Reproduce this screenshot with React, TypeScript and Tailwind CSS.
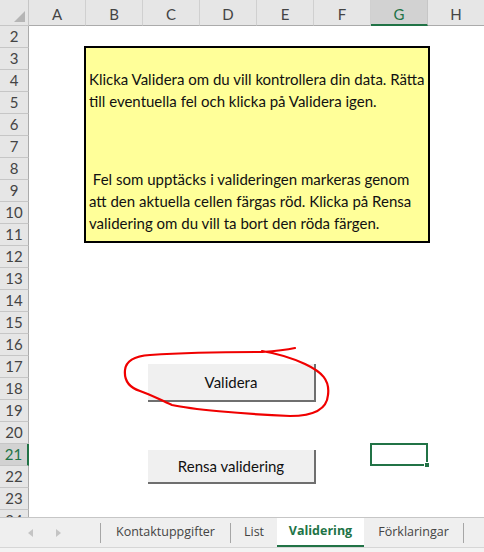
const COLUMNS = ["A", "B", "C", "D", "E", "F", "G", "H"];
const ROWS = Array.from({ length: 23 }, (_, i) => i + 2);

const SELECTED_COL = "G";
const SELECTED_ROW = 21;

function CornerCell() {
  return (
    <div className="relative h-full w-[29px] shrink-0 border-b border-r border-[#c6c6c6] bg-[#e6e6e6]">
      <svg className="absolute bottom-[3px] right-[3px]" width="11" height="11" viewBox="0 0 11 11">
        <polygon points="11,0 11,11 0,11" fill="#b5b5b5" />
      </svg>
    </div>
  );
}

function ColumnHeader() {
  return (
    <div className="flex h-[26px] shrink-0 bg-[#e6e6e6]">
      <CornerCell />
      {COLUMNS.map((col) => {
        const selected = col === SELECTED_COL;
        return (
          <div
            key={col}
            className={
              selected
                ? "flex w-[57px] shrink-0 items-center justify-center border-b-2 border-r border-b-[#217346] border-r-[#c6c6c6] bg-[#d2d2d2] pt-[4px] text-[15px] text-[#217346]"
                : "flex w-[57px] shrink-0 items-center justify-center border-b border-r border-b-[#ababab] border-r-[#d0d0d0] pt-[4px] text-[15px] text-[#444]"
            }
          >
            {col}
          </div>
        );
      })}
    </div>
  );
}

function RowHeaders() {
  return (
    <div className="flex w-[29px] shrink-0 flex-col overflow-hidden bg-[#e6e6e6]">
      {ROWS.map((row) => {
        const selected = row === SELECTED_ROW;
        return (
          <div
            key={row}
            className={
              selected
                ? "flex h-[22px] shrink-0 items-center justify-center border-b border-r-2 border-b-[#c6c6c6] border-r-[#217346] bg-[#d2d2d2] text-[15px] text-[#217346]"
                : "flex h-[22px] shrink-0 items-center justify-center border-b border-r border-b-[#c6c6c6] border-r-[#ababab] text-[15px] text-[#444]"
            }
          >
            {row}
          </div>
        );
      })}
    </div>
  );
}

function SheetButton({ label, className }: { label: string; className: string }) {
  return (
    <div
      className={`absolute flex w-[168px] items-center justify-center border-b-2 border-r-2 border-[#6f6f6f] bg-[#f0f0f0] text-[15px] text-[#111] ${className}`}
    >
      {label}
    </div>
  );
}

function RedCircle() {
  // hand-drawn marker stroke round the Validera button, in page coordinates
  return (
    <svg
      className="pointer-events-none absolute left-0 top-0"
      width="455"
      height="491"
      viewBox="29 26 455 491"
    >
      <path
        d="M295,348 C285,350 275,351 262,352 C225,352 180,353 150,355 C135,356 126,360 125,370 C124,380 128,387 140,391 C152,395 160,400 172,405 C190,409 240,414 290,416 C315,416 327,408 328,395 C330,380 322,372 305,364 C292,358 280,354 262,351"
        fill="none"
        stroke="#f00000"
        strokeWidth="2.2"
        strokeLinecap="round"
        strokeLinejoin="round"
      />
    </svg>
  );
}

function Sheet() {
  return (
    <div className="relative flex-1 overflow-hidden bg-white">
      <div className="absolute left-[55px] top-[20px] h-[197px] w-[346px] border-2 border-black bg-[#ffff99] pl-[3px] text-[15px] leading-[22px] text-[#111]">
        <div className="pt-[20px]">
          <p className="whitespace-nowrap">Klicka Validera om du vill kontrollera din data. Rätta</p>
          <p className="whitespace-nowrap">till eventuella fel och klicka på Validera igen.</p>
        </div>
        <div className="mt-[56px]">
          <p className="whitespace-pre">{" Fel som upptäcks i valideringen markeras genom"}</p>
          <p className="whitespace-nowrap">att den aktuella cellen färgas röd. Klicka på Rensa</p>
          <p className="whitespace-nowrap">validering om du vill ta bort den röda färgen.</p>
        </div>
      </div>

      <SheetButton label="Validera" className="left-[119px] top-[338px] h-[38px]" />
      <SheetButton label="Rensa validering" className="left-[119px] top-[424px] h-[34px]" />

      <RedCircle />

      <div className="absolute left-[341px] top-[417px] h-[23px] w-[58px] border-2 border-[#217346]">
        <div className="absolute -bottom-[4px] -right-[4px] h-[6px] w-[6px] border border-white bg-[#217346]" />
      </div>
    </div>
  );
}

function Arrow({ dir }: { dir: "left" | "right" }) {
  return (
    <svg width="5" height="8" viewBox="0 0 5 8">
      <polygon points={dir === "left" ? "5,0 5,8 0,4" : "0,0 0,8 5,4"} fill="#c4c4c4" />
    </svg>
  );
}

function Separator() {
  return <div className="h-[20px] w-px shrink-0 bg-[#a6a6a6]" />;
}

const TABS = [
  { name: "Kontaktuppgifter", width: "w-[129px]" },
  { name: "List", width: "w-[46px]" },
  { name: "Validering", width: "w-[87px]", active: true },
  { name: "Förklaringar", width: "w-[99px]" },
];

function SheetTabs() {
  return (
    <div className="flex h-[35px] shrink-0 flex-col border-t border-[#c6c6c6] bg-[#efefef] font-['Open_Sans','Noto_Sans',sans-serif] text-[12.5px] text-[#444]">
      <div className="flex h-[29px] shrink-0 items-center">
        <div className="flex w-[100px] shrink-0 items-center gap-[23px] pl-[28px]">
          <Arrow dir="left" />
          <Arrow dir="right" />
        </div>
        <Separator />
        {TABS.map((tab, i) =>
          tab.active ? (
            <div
              key={tab.name}
              className={`flex h-full shrink-0 items-center justify-center border-b-2 border-[#217346] bg-white pb-[1px] font-bold text-[#217346] ${tab.width}`}
            >
              {tab.name}
            </div>
          ) : (
            <div key={tab.name} className="flex h-full items-center">
              <div className={`flex shrink-0 items-center justify-center ${tab.width}`}>{tab.name}</div>
              {i === 0 || i === TABS.length - 1 ? <Separator /> : null}
            </div>
          ),
        )}
      </div>
      <div className="flex-1 border-t border-[#d6d6d6] bg-[#f3f3f3]" />
    </div>
  );
}

export default function App() {
  return (
    <div className="flex h-[552px] w-[484px] flex-col overflow-hidden bg-white font-['Lato','Liberation_Sans',sans-serif]">
      <ColumnHeader />
      <div className="flex h-[491px] shrink-0">
        <RowHeaders />
        <Sheet />
      </div>
      <SheetTabs />
    </div>
  );
}
